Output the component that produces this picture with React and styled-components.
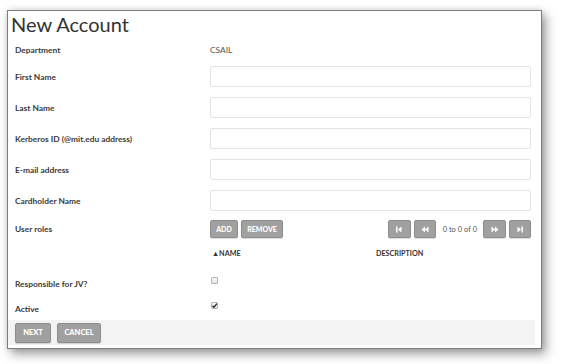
import React from 'react';
import styled, { createGlobalStyle } from 'styled-components';

const GlobalStyle = createGlobalStyle`
  html, body {
    margin: 0;
    padding: 0;
    background: #ffffff;
  }
  body {
    font-family: Lato, "Open Sans", sans-serif;
    color: #333;
  }
`;

const Page = styled.div`
  width: 561px;
  height: 364px;
  padding: 10px 0 0 7px;
  box-sizing: border-box;
`;

const Window = styled.div`
  width: 535px;
  height: 339px;
  box-sizing: border-box;
  border: 1px solid #7d7d7d;
  background: #fff;
  box-shadow: 4px 5px 10px rgba(0, 0, 0, 0.38), 0 0 6px rgba(0, 0, 0, 0.12);
  display: flex;
  flex-direction: column;
`;

const Title = styled.h1`
  margin: 0;
  height: 27px;
  padding: 0 0 0 3px;
  font-size: 20px;
  font-weight: 400;
  line-height: 27px;
  color: #333;
`;

const Form = styled.div`
  display: flex;
  flex-direction: column;
  padding: 0 10px 0 7px;
  flex: 1;
`;

const Row = styled.div`
  display: grid;
  grid-template-columns: 195px 1fr;
  align-items: ${p => (p.$top ? 'start' : 'center')};
  height: ${p => p.$h}px;
`;

const Label = styled.div`
  font-size: 8.4px;
  font-weight: 700;
  color: #3a3a3a;
  padding-top: ${p => p.$pt || 0}px;
  line-height: 12px;
`;

const Value = styled.div`
  font-size: 8.4px;
  color: #555;
`;

const Input = styled.input`
  display: block;
  box-sizing: border-box;
  width: 100%;
  height: 21px;
  margin: 0;
  border: 1px solid #e3e3e3;
  border-radius: 2px;
  background: #fff;
  outline: none;
`;

const Toolbar = styled.div`
  display: flex;
  align-items: center;
  justify-content: space-between;
`;

const Group = styled.div`
  display: flex;
  align-items: center;
  gap: ${p => p.$gap || 3}px;
`;

const Button = styled.button`
  height: ${p => p.$h || 18}px;
  width: ${p => p.$w}px;
  padding: 0;
  margin: 0;
  box-sizing: border-box;
  border: 1px solid #8e8e8e;
  border-radius: 2px;
  background: #a0a0a0;
  color: #fff;
  font-family: Lato, sans-serif;
  font-size: ${p => p.$fs || 7}px;
  font-weight: 900;
  text-transform: uppercase;
  box-shadow: 0 1px 1px rgba(0, 0, 0, 0.15);
  display: flex;
  align-items: center;
  justify-content: center;
`;

const PageInfo = styled.span`
  font-size: 7.5px;
  color: #555;
  margin: 0 3px 0 4px;
`;

const Header = styled.div`
  display: grid;
  grid-template-columns: 164px 1fr;
  padding-left: 2px;
  font-size: 7.2px;
  font-weight: 700;
  color: #333;
`;

const Check = styled.span`
  display: block;
  width: 7px;
  height: 7px;
  box-sizing: border-box;
  border: 1px solid #b5b5b5;
  border-radius: 1px;
  background: linear-gradient(#fafafa, #e4e4e4);
  margin: ${p => p.$mt}px 0 0 1px;
  position: relative;
`;

const Footer = styled.div`
  display: flex;
  gap: 6px;
  align-items: center;
  height: 25px;
  box-sizing: border-box;
  padding: 0 7px;
  margin: 0 6px 3px 0;
  background: #f3f3f3;
`;

const PagerIcon = ({ kind }) => (
  <svg width="8" height="7" viewBox="0 0 8 7">
    {kind === 'first' && (
      <>
        <rect x="1" y="0.5" width="1.5" height="6" fill="#fff" />
        <path d="M6.5 0.5 L3 3.5 L6.5 6.5 Z" fill="#fff" />
      </>
    )}
    {kind === 'prev' && (
      <>
        <path d="M4 0.5 L0.5 3.5 L4 6.5 Z" fill="#fff" />
        <path d="M7.5 0.5 L4 3.5 L7.5 6.5 Z" fill="#fff" />
      </>
    )}
    {kind === 'next' && (
      <>
        <path d="M0.5 0.5 L4 3.5 L0.5 6.5 Z" fill="#fff" />
        <path d="M4 0.5 L7.5 3.5 L4 6.5 Z" fill="#fff" />
      </>
    )}
    {kind === 'last' && (
      <>
        <path d="M1.5 0.5 L5 3.5 L1.5 6.5 Z" fill="#fff" />
        <rect x="5.5" y="0.5" width="1.5" height="6" fill="#fff" />
      </>
    )}
  </svg>
);

const fields = ['First Name', 'Last Name', 'Kerberos ID (@mit.edu address)', 'E-mail address', 'Cardholder Name'];

export default function App() {
  return (
    <>
      <GlobalStyle />
      <Page>
        <Window>
          <Title>New Account</Title>
          <Form>
            <Row $h={23}>
              <Label>Department</Label>
              <Value>CSAIL</Value>
            </Row>
            {fields.map(f => (
              <Row key={f} $h={31}>
                <Label>{f}</Label>
                <Input />
              </Row>
            ))}
            <Row $h={26}>
              <Label>User roles</Label>
              <Toolbar>
                <Group>
                  <Button $w={28}>Add</Button>
                  <Button $w={42}>Remove</Button>
                </Group>
                <Group>
                  <Button $w={23}><PagerIcon kind="first" /></Button>
                  <Button $w={22}><PagerIcon kind="prev" /></Button>
                  <PageInfo>0 to 0 of 0</PageInfo>
                  <Button $w={23}><PagerIcon kind="next" /></Button>
                  <Button $w={22}><PagerIcon kind="last" /></Button>
                </Group>
              </Toolbar>
            </Row>
            <Row $h={22}>
              <span />
              <Header>
                <span>▲NAME</span>
                <span>DESCRIPTION</span>
              </Header>
            </Row>
            <Row $h={32} $top>
              <Label $pt={14}>Responsible for JV?</Label>
              <Check $mt={13} />
            </Row>
            <Row $h={24} $top>
              <Label $pt={7}>Active</Label>
              <Check $mt={6}>
                <svg width="7" height="7" viewBox="0 0 7 7" style={{ position: 'absolute', left: -1, top: -1 }}>
                  <path d="M1.5 3.8 L3 5.3 L5.8 1.6" stroke="#222" strokeWidth="1.3" fill="none" />
                </svg>
              </Check>
            </Row>
          </Form>
          <Footer>
            <Button $w={36} $h={20} $fs={7.5}>Next</Button>
            <Button $w={44} $h={20} $fs={7.5}>Cancel</Button>
          </Footer>
        </Window>
      </Page>
    </>
  );
}
